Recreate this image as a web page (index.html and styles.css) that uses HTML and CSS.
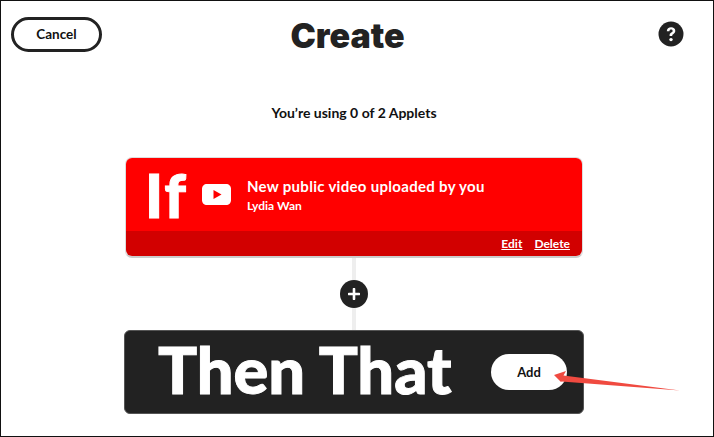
FILE: index.html
```html
<!DOCTYPE html>
<html lang="en">
<head>
    <meta charset="UTF-8">
    <meta name="viewport" content="width=device-width, initial-scale=1.0">
    <title>Create</title>
    <link rel="stylesheet" href="styles.css">
</head>
<body>
    <div class="page">
        <header class="header">
            <div class="header-left">
                <button class="cancel-btn">Cancel</button>
            </div>
            <h1>Create</h1>
            <div class="header-right">
                <svg class="help-icon" viewBox="0 0 26 26" width="26" height="26">
                    <circle cx="13" cy="13" r="12.5" fill="#222"/>
                    <path d="M8.800 10.200c0-2.600 1.900-4 4.300-4s4.200 1.400 4.200 3.600c0 1.700-.9 2.600-2.100 3.400-.8.500-1 .9-1 1.800h-2.600c-.1-1.700.4-2.600 1.600-3.400.9-.6 1.400-1 1.400-1.700 0-.8-.6-1.300-1.500-1.300-1 0-1.600.6-1.700 1.600z" fill="#fff"/>
                    <circle cx="13" cy="18.600" r="1.700" fill="#fff"/>
                </svg>
            </div>
        </header>
        <p class="usage">You’re using 0 of 2 Applets</p>
        <section class="if-card">
            <div class="if-main">
                <span class="if-word">If</span>
                <svg class="yt-icon" viewBox="0 0 29 21" width="29" height="21">
                    <path d="M5 0h19c3 0 5 2 5 5v11c0 3-2 5-5 5H5c-3 0-5-2-5-5V5c0-3 2-5 5-5z" fill="#fff"/>
                    <path d="M11.500 6l8 4.500-8 4.500z" fill="#f00"/>
                </svg>
                <div class="if-text">
                    <div class="if-title">New public video uploaded by you</div>
                    <div class="if-owner">Lydia Wan</div>
                </div>
            </div>
            <div class="if-footer">
                <a href="#">Edit</a>
                <a href="#">Delete</a>
            </div>
        </section>
        <div class="connector">
            <span class="plus">
                <svg viewBox="0 0 12 12" width="12" height="12">
                    <path d="M6 1v10M1 6h10" stroke="#fff" stroke-width="2.600" stroke-linecap="round"/>
                </svg>
            </span>
        </div>
        <section class="then-card">
            <span class="then-word">Then That</span>
            <button class="add-btn">Add</button>
        </section>
    </div>
    <!-- annotation drawn on top of the screenshot -->
    <svg class="arrow" viewBox="0 0 714 437" width="714" height="437">
        <path d="M554 375L566 371L563.500 375.500L680 390.500L561.500 381.500L561 382z" fill="#f04a40"/>
    </svg>
</body>
</html>
```

FILE: styles.css
```css
html, body {
    margin: 0;
    padding: 0;
    height: 100%;
    overflow: hidden;
}
body {
    font-family: Lato, Arial, sans-serif;
    font-weight: 700;
    color: #222;
    background: white;
}
.page {
    box-sizing: border-box;
    width: 714px;
    height: 437px;
    border: 1px solid #111;
    padding-right: 6px;
    display: flex;
    flex-direction: column;
    align-items: center;
}
.header {
    width: 100%;
    display: grid;
    grid-template-columns: 1fr auto 1fr;
    padding: 16px 23px 0 10px;
    box-sizing: border-box;
    height: 75px;
}
.header h1 {
    margin: 0;
    font-family: Inter, Lato, sans-serif;
    font-size: 34px;
    font-weight: 900;
    line-height: 38px;
}
.header-right {
    display: flex;
    justify-content: flex-end;
    padding-top: 4px;
}
.help-icon {
    display: block;
}
.cancel-btn {
    width: 91px;
    height: 35px;
    background: white;
    border: 3px solid #222;
    border-radius: 18px;
    font-family: inherit;
    font-size: 13.5px;
    font-weight: 700;
    color: #111;
    padding: 0 0 2px;
}
.usage {
    margin: 0;
    padding-top: 29px;
    font-size: 14px;
    line-height: 16px;
    height: 52px;
    color: #111;
}
.if-card {
    box-sizing: border-box;
    width: 458px;
    height: 101px;
    border: 1px solid #ddd;
    border-bottom: 2px solid #ccc;
    border-radius: 7px;
    display: flex;
    flex-direction: column;
    color: white;
}
.if-main {
    flex: 1;
    background: #f00;
    border-radius: 6px 6px 0 0;
    display: flex;
    align-items: center;
    padding-left: 19px;
}
.if-word {
    font-size: 60px;
    font-weight: 900;
    line-height: 70px;
    letter-spacing: 2px;
    margin-right: 14px;
    -webkit-text-stroke: 1px white;
}
.yt-icon {
    display: block;
    margin-right: 16px;
}
.if-title {
    font-size: 15px;
    line-height: 18px;
    letter-spacing: 0.3px;
}
.if-owner {
    font-size: 12px;
    line-height: 14px;
    margin-top: 4px;
}
.if-footer {
    height: 25px;
    background: #d20000;
    border-radius: 0 0 6px 6px;
    display: flex;
    justify-content: flex-end;
    align-items: center;
    gap: 12px;
    padding-right: 12px;
    font-size: 12px;
}
.if-footer a {
    color: white;
}
.connector {
    width: 4px;
    height: 72px;
    background: #eee;
    display: flex;
    justify-content: center;
    align-items: center;
}
.connector .plus {
    flex: none;
    width: 28px;
    height: 28px;
    border-radius: 50%;
    background: #222;
    display: flex;
    justify-content: center;
    align-items: center;
}
.then-card {
    box-sizing: border-box;
    width: 460px;
    height: 84px;
    background: #222;
    border: 1px solid #555;
    border-radius: 6px;
    display: flex;
    align-items: center;
    justify-content: space-between;
    padding: 0 16px 0 33px;
    color: white;
}
.then-word {
    font-size: 65px;
    font-weight: 900;
    line-height: 80px;
    margin-bottom: 6px;
    -webkit-text-stroke: 1px white;
}
.add-btn {
    width: 76px;
    height: 36px;
    background: white;
    border: none;
    border-radius: 18px;
    font-family: inherit;
    font-size: 13px;
    font-weight: 700;
    color: #111;
    padding: 0;
}
.arrow {
    position: absolute;
    left: 0;
    top: 0;
    pointer-events: none;
}
```
